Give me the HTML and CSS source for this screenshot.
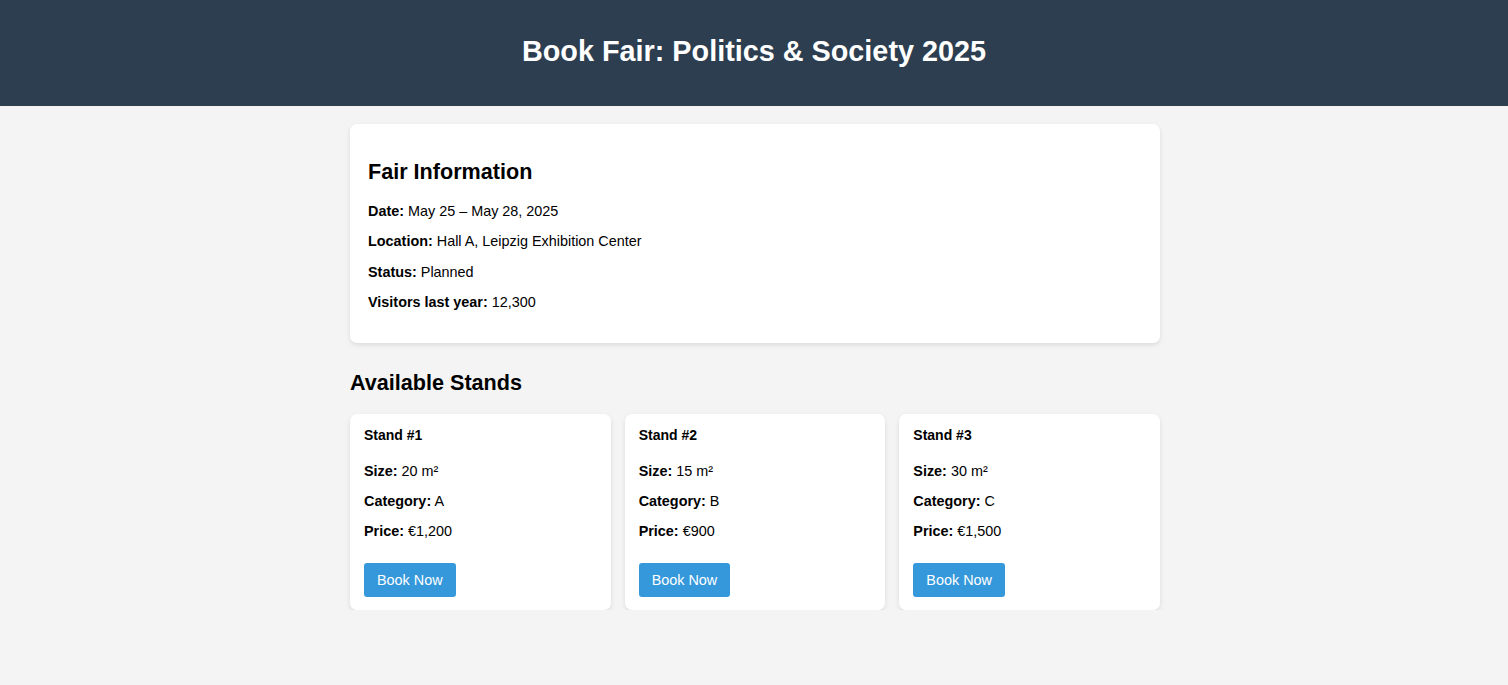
FILE: index.html
```html
<!DOCTYPE html>
<html lang="en">
<head>
<meta charset="utf-8">
<title>Book Fair: Politics &amp; Society 2025</title>
<link rel="stylesheet" href="styles.css">
</head>
<body>
<header class="site-header">
  <h1 class="site-title">Book Fair: Politics &amp; Society 2025</h1>
</header>
<main class="container">
  <section class="card info-card">
    <h2 class="info-title">Fair Information</h2>
    <p class="info-line"><strong>Date:</strong> May 25 – May 28, 2025</p>
    <p class="info-line"><strong>Location:</strong> Hall A, Leipzig Exhibition Center</p>
    <p class="info-line"><strong>Status:</strong> Planned</p>
    <p class="info-line"><strong>Visitors last year:</strong> 12,300</p>
  </section>
  <h2 class="section-title">Available Stands</h2>
  <div class="stands">
    <div class="card stand">
      <h3 class="stand-title">Stand #1</h3>
      <p class="stand-line"><strong>Size:</strong> 20 m²</p>
      <p class="stand-line"><strong>Category:</strong> A</p>
      <p class="stand-line"><strong>Price:</strong> €1,200</p>
      <button class="book-btn" type="button">Book Now</button>
    </div>
    <div class="card stand">
      <h3 class="stand-title">Stand #2</h3>
      <p class="stand-line"><strong>Size:</strong> 15 m²</p>
      <p class="stand-line"><strong>Category:</strong> B</p>
      <p class="stand-line"><strong>Price:</strong> €900</p>
      <button class="book-btn" type="button">Book Now</button>
    </div>
    <div class="card stand">
      <h3 class="stand-title">Stand #3</h3>
      <p class="stand-line"><strong>Size:</strong> 30 m²</p>
      <p class="stand-line"><strong>Category:</strong> C</p>
      <p class="stand-line"><strong>Price:</strong> €1,500</p>
      <button class="book-btn" type="button">Book Now</button>
    </div>
  </div>
</main>
</body>
</html>
```
FILE: styles.css
```css
html, body {
  margin: 0;
  padding: 0;
}
body {
  font-family: "Liberation Sans", Arial, sans-serif;
  font-size: 14.4px;
  background: #f4f4f4;
  color: #000;
}
.site-header {
  background: #2c3e50;
  color: #fff;
  text-align: center;
  padding: 35px 0 38px;
}
.site-title {
  margin: 0;
  font-size: 28.8px;
  font-weight: bold;
  line-height: 33px;
}
.container {
  width: 810px;
  margin-left: calc(50% - 404px);
  padding-top: 18px;
}
.card {
  background: #fff;
  border-radius: 7px;
  box-shadow: 0 2px 5px rgba(0, 0, 0, 0.1);
}
.info-card {
  padding: 18px;
}
.info-title {
  font-size: 21.6px;
  line-height: 25px;
  margin: 17px 0 19px;
}
.info-line {
  margin: 0 0 14.4px;
  line-height: 16px;
}
.section-title {
  font-size: 21.6px;
  line-height: 25px;
  margin: 27px 0 19px;
}
.stands {
  display: grid;
  grid-template-columns: repeat(3, 1fr);
  gap: 14px;
}
.stand {
  padding: 13px 14px;
}
.stand-title {
  font-size: 14px;
  line-height: 16px;
  margin: 0 0 20px;
}
.stand-line {
  margin: 0 0 14.4px;
  line-height: 16px;
}
.book-btn {
  margin-top: 24px;
  display: block;
  background: #3498db;
  color: #fff;
  border: none;
  border-radius: 3px;
  font-family: "Liberation Sans", Arial, sans-serif;
  font-size: 14.4px;
  line-height: 16px;
  padding: 9px 13px;
  cursor: pointer;
}
```
